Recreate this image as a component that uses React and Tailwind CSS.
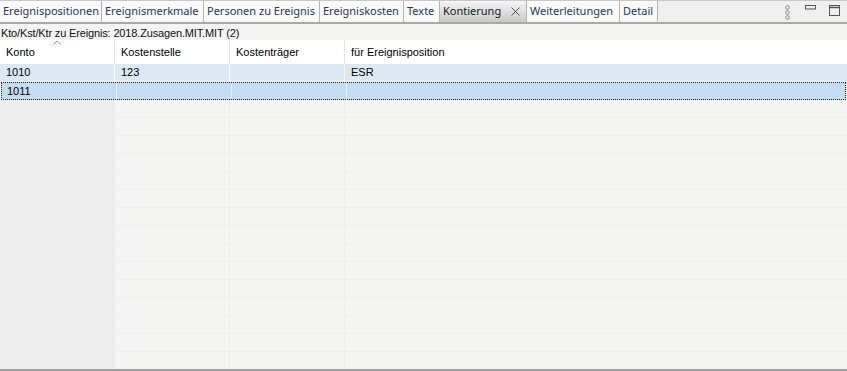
import React from 'react';

const tabs = [
  { label: 'Ereignispositionen', w: 'w-[102px]' },
  { label: 'Ereignismerkmale', w: 'w-[102px]' },
  { label: 'Personen zu Ereignis', w: 'w-[116px]' },
  { label: 'Ereigniskosten', w: 'w-[84px]' },
  { label: 'Texte', w: 'w-[36px]' },
  { label: 'Kontierung', w: 'w-[87px]', active: true },
  { label: 'Weiterleitungen', w: 'w-[93px]' },
  { label: 'Detail', w: 'w-[38px]' },
];

const columns = [
  { label: 'Konto', w: 'w-[115px]' },
  { label: 'Kostenstelle', w: 'w-[115px]' },
  { label: 'Kostenträger', w: 'w-[115px]' },
  { label: 'für Ereignisposition', w: 'flex-1' },
];

const rows = [
  ['1010', '123', '', 'ESR'],
  ['1011', '', '', ''],
];

export default function App() {
  const emptyRows = Array.from({ length: 15 });

  return (
    <div className="w-[847px] h-[371px] overflow-hidden bg-[#f4f4f3] flex flex-col font-['Liberation_Sans',Arial,sans-serif] text-[11px] text-black">
      {/* Tab strip */}
      <div className="h-[24px] flex items-stretch bg-[#f0f0f0] border-t border-[#c8c8c8] border-b-2 border-b-[#a8a8a8] shrink-0">
        {tabs.map((t) => (
          <div
            key={t.label}
            className={`${t.w} flex items-center px-[3px] border-r border-[#b4b4b4] font-['Noto_Sans',sans-serif] text-[11px] whitespace-nowrap overflow-hidden ${
              t.active
                ? 'bg-gradient-to-b from-[#f6f6f6] to-[#c9c9c9] text-[#101820]'
                : 'bg-[#f9f9f9] text-[#1e3a5a]'
            }`}
          >
            <span>{t.label}</span>
            {t.active && (
              <svg className="ml-[10px] w-[9px] h-[9px]" viewBox="0 0 9 9">
                <path d="M0.5 0.5 L8.5 8.5 M8.5 0.5 L0.5 8.5" stroke="#555" strokeWidth="1" />
              </svg>
            )}
          </div>
        ))}
        <div className="flex-1" />
        <div className="flex items-start pt-[4px] pr-[7px]">
          <svg className="w-[5px] h-[15px]" viewBox="0 0 5 15">
            <circle cx="2.5" cy="2.5" r="1.8" fill="none" stroke="#888" strokeWidth="1" />
            <circle cx="2.5" cy="7.5" r="1.8" fill="none" stroke="#888" strokeWidth="1" />
            <circle cx="2.5" cy="12.5" r="1.8" fill="none" stroke="#888" strokeWidth="1" />
          </svg>
          <svg className="ml-[15px] w-[11px] h-[5px]" viewBox="0 0 11 5">
            <rect x="0.5" y="0.5" width="10" height="3.5" fill="none" stroke="#555" strokeWidth="1" />
          </svg>
          <svg className="ml-[13px] w-[11px] h-[11px]" viewBox="0 0 11 11">
            <rect x="0.5" y="0.5" width="10" height="10" fill="none" stroke="#555" strokeWidth="1" />
            <line x1="0" y1="2.5" x2="11" y2="2.5" stroke="#555" strokeWidth="1.5" />
          </svg>
        </div>
      </div>

      {/* Title */}
      <div className="h-[14px] leading-[14px] pl-[1px] mt-[2px] shrink-0 text-[#111] tracking-[-0.15px]">
        Kto/Kst/Ktr zu Ereignis: 2018.Zusagen.MIT.MIT (2)
      </div>

      {/* Table */}
      <div className="flex-1 flex flex-col min-h-0">
        {/* header */}
        <div className="relative h-[24px] flex bg-white shrink-0">
          {columns.map((c, i) => (
            <div
              key={c.label}
              className={`${c.w} flex items-center pl-[6px] ${i < 3 ? 'border-r border-[#e5e5e5]' : ''}`}
            >
              {c.label}
            </div>
          ))}
          <svg className="absolute left-[53px] top-[0px] w-[8px] h-[5px]" viewBox="0 0 8 5">
            <path d="M0.5 4.5 L4 1 L7.5 4.5" fill="none" stroke="#888" strokeWidth="1" />
          </svg>
        </div>

        {/* data rows */}
        {rows.map((r, ri) => (
          <div
            key={ri}
            className={`h-[18px] flex shrink-0 ${
              ri === 0
                ? 'bg-[#dde8f3] border-b border-[#f0f4f8]'
                : 'bg-[#c5ddf3] border border-dotted border-[#222] mr-[1px] ml-[1px]'
            }`}
          >
            {r.map((cell, ci) => (
              <div
                key={ci}
                className={`${columns[ci].w} flex items-center ${ri === 1 && ci === 0 ? 'pl-[5px] w-[114px]' : 'pl-[6px]'} ${
                  ci < 3 ? (ri === 0 ? 'border-r border-[#f7f9fc]' : 'border-r border-[#e6eff9]') : ''
                }`}
              >
                {cell}
              </div>
            ))}
          </div>
        ))}

        {/* empty rows */}
        {emptyRows.map((_, i) => (
          <div key={i} className="h-[18px] flex shrink-0 border-b border-[#eeeeee]">
            <div className="w-[115px] bg-[#ececec] border-r border-[#ececec]" />
            <div className="w-[115px] border-r border-[#eeeeee]" />
            <div className="w-[115px] border-r border-[#eeeeee]" />
            <div className="flex-1" />
          </div>
        ))}
      </div>
      <div className="h-[2px] bg-[#a0a0a0] shrink-0" />
    </div>
  );
}
